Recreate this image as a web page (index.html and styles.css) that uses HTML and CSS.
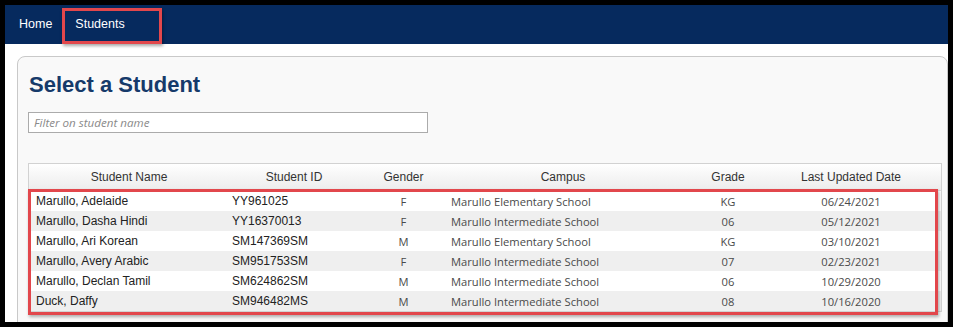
FILE: index.html
```html
<!DOCTYPE html>
<html lang="en">
<head>
    <meta charset="UTF-8">
    <meta name="viewport" content="width=device-width, initial-scale=1.0">
    <title>Select a Student</title>
    <link rel="stylesheet" href="styles.css">
</head>
<body>

<div class="frame">
    <nav class="topnav">
        <a class="nav-link" href="#">Home</a>
        <a class="nav-link active" href="#">Students</a>
    </nav>

    <div class="card">
        <h1>Select a Student</h1>
        <input class="filter" type="text" placeholder="Filter on student name">

        <div class="student-table">
            <div class="row head">
                <div class="cell center">Student Name</div>
                <div class="cell center">Student ID</div>
                <div class="cell center">Gender</div>
                <div class="cell center">Campus</div>
                <div class="cell center">Grade</div>
                <div class="cell center">Last Updated Date</div>
            </div>

            <div class="rows">
                <div class="row">
                    <div class="cell">Marullo, Adelaide</div>
                    <div class="cell">YY961025</div>
                    <div class="cell center alt">F</div>
                    <div class="cell alt">Marullo Elementary School</div>
                    <div class="cell center alt">KG</div>
                    <div class="cell center alt">06/24/2021</div>
                </div>
                <div class="row">
                    <div class="cell">Marullo, Dasha Hindi</div>
                    <div class="cell">YY16370013</div>
                    <div class="cell center alt">F</div>
                    <div class="cell alt">Marullo Intermediate School</div>
                    <div class="cell center alt">06</div>
                    <div class="cell center alt">05/12/2021</div>
                </div>
                <div class="row">
                    <div class="cell">Marullo, Ari Korean</div>
                    <div class="cell">SM147369SM</div>
                    <div class="cell center alt">M</div>
                    <div class="cell alt">Marullo Elementary School</div>
                    <div class="cell center alt">KG</div>
                    <div class="cell center alt">03/10/2021</div>
                </div>
                <div class="row">
                    <div class="cell">Marullo, Avery Arabic</div>
                    <div class="cell">SM951753SM</div>
                    <div class="cell center alt">F</div>
                    <div class="cell alt">Marullo Intermediate School</div>
                    <div class="cell center alt">07</div>
                    <div class="cell center alt">02/23/2021</div>
                </div>
                <div class="row">
                    <div class="cell">Marullo, Declan Tamil</div>
                    <div class="cell">SM624862SM</div>
                    <div class="cell center alt">M</div>
                    <div class="cell alt">Marullo Intermediate School</div>
                    <div class="cell center alt">06</div>
                    <div class="cell center alt">10/29/2020</div>
                </div>
                <div class="row">
                    <div class="cell">Duck, Daffy</div>
                    <div class="cell">SM946482MS</div>
                    <div class="cell center alt">M</div>
                    <div class="cell alt">Marullo Intermediate School</div>
                    <div class="cell center alt">08</div>
                    <div class="cell center alt">10/16/2020</div>
                </div>
            </div>

            <!-- highlight drawn over the result rows -->
            <div class="highlight"></div>
        </div>
    </div>
</div>

</body>
</html>
```

FILE: styles.css
```css
body {
    margin: 0;
    padding: 0;
    background-color: #000;
    font-family: 'Liberation Sans', Arial, sans-serif;
    overflow: hidden;
}

.frame {
    margin: 5px 5px 0 5px;
    height: 317px;
    background-color: #fff;
    overflow: hidden;
}

.topnav {
    display: flex;
    height: 39px;
    background-color: #062a5e;
}

.nav-link {
    display: block;
    color: #fff;
    text-decoration: none;
    font-size: 12.5px;
    line-height: 18px;
    padding: 10px 10px 0 14px;
}

.nav-link.active {
    box-sizing: border-box;
    width: 100px;
    height: 36px;
    margin-top: 3px;
    padding: 7px 0 0 13px;
    box-shadow: inset 0 0 0 3px #e2474c, 1px 2px 3px rgba(0, 0, 0, 0.35);
}

.card {
    margin: 12px 0 0 12px;
    padding: 15px 0 0 10px;
    height: 300px;
    background-color: #f9f9f9;
    border: 1px solid #c9c9c9;
    border-radius: 8px;
}

h1 {
    margin: 0 0 0 1px;
    font-size: 22px;
    line-height: 26px;
    color: #163a6a;
}

.filter {
    display: block;
    box-sizing: border-box;
    width: 400px;
    height: 21px;
    margin-top: 14px;
    padding: 0 5px;
    border: 1px solid #ababab;
    background-color: #fff;
    font-family: 'Open Sans', sans-serif;
    font-style: italic;
    font-size: 11.6px;
    color: #555;
}

.filter::placeholder {
    color: #8a8a8a;
}

.student-table {
    position: relative;
    width: 912px;
    margin-top: 30px;
    border: 1px solid #d2d2d2;
    border-top: 0;
    background-color: #fff;
}

.row {
    display: grid;
    grid-template-columns: 198px 134px 85px 234px 96px 150px 1fr;
    height: 20px;
    align-items: center;
    font-size: 12px;
    color: #222;
}

.row.head {
    height: 26px;
    border-top: 1px solid #d2d2d2;
    border-bottom: 1px solid #dcdcdc;
    background: linear-gradient(#fff, #ececec);
    color: #333;
}

.rows .row:nth-child(even) {
    background-color: #efefef;
}

.cell {
    padding: 0 5px;
    white-space: nowrap;
}

.row .cell:first-child {
    padding-left: 7px;
}

.cell.center {
    text-align: center;
}

.cell.alt {
    font-family: 'Open Sans', sans-serif;
    font-size: 11.2px;
    color: #4a4a4a;
}

.highlight {
    position: absolute;
    left: -1px;
    top: 26px;
    width: 904px;
    height: 120px;
    border: 3px solid #e2474c;
    box-shadow: 1px 2px 3px rgba(0, 0, 0, 0.3);
}
```
